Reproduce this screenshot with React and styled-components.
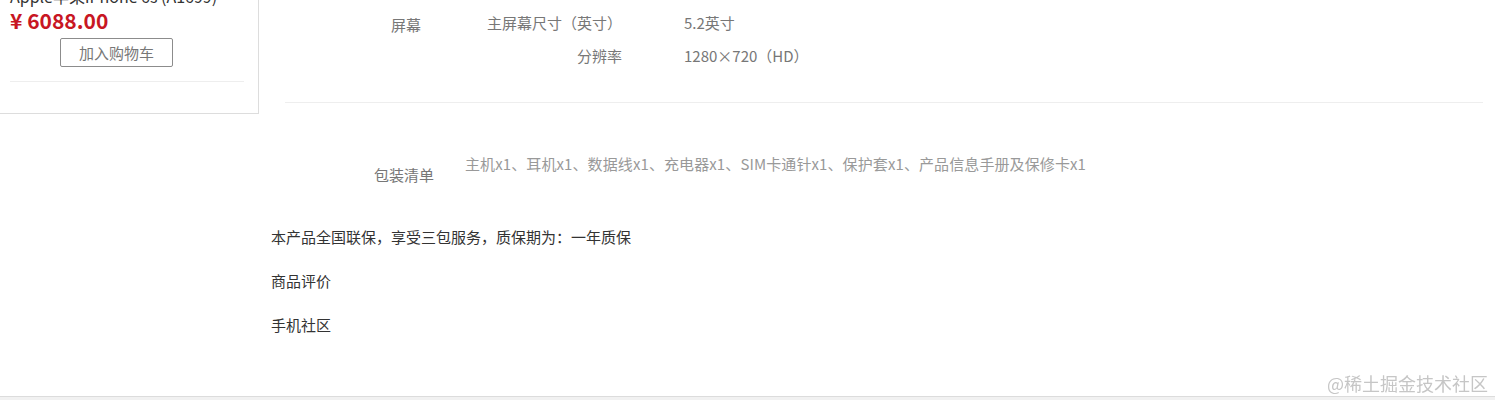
import React from "react";
import styled, { createGlobalStyle } from "styled-components";

const specs = [
  { key: "主屏幕尺寸（英寸）", value: "5.2英寸" },
  { key: "分辨率", value: "1280×720（HD）" },
];

const App = () => {
  return (
    <>
      <GlobalStyle />
      <Layout>
        <Card>
          <Title>Apple苹果iPhone 6s (A1699)</Title>
          <Price>¥ 6088.00</Price>
          <CartButton>加入购物车</CartButton>
          <CardLine />
        </Card>
        <Main>
          <SpecSection>
            <Group>
              <GroupLabel $w={201} $pad={106} $top={2}>
                屏幕
              </GroupLabel>
              <Rows>
                {specs.map((s) => (
                  <Row key={s.key}>
                    <Key>{s.key}</Key>
                    <Value>{s.value}</Value>
                  </Row>
                ))}
              </Rows>
            </Group>
          </SpecSection>
          <PackSection>
            <GroupLabel $w={180} $pad={89} $top={11}>
              包装清单
            </GroupLabel>
            <PackItems>
              主机x1、耳机x1、数据线x1、充电器x1、SIM卡通针x1、保护套x1、产品信息手册及保修卡x1
            </PackItems>
          </PackSection>
          <Notes>
            <Note>本产品全国联保，享受三包服务，质保期为：一年质保</Note>
            <Note>商品评价</Note>
            <Note>手机社区</Note>
          </Notes>
        </Main>
      </Layout>
      <Watermark>@稀土掘金技术社区</Watermark>
      <ScrollStrip />
    </>
  );
};

const GlobalStyle = createGlobalStyle`
  html, body {
    margin: 0;
    padding: 0;
    background: #fff;
    overflow: hidden;
  }
  body {
    font-family: "Noto Sans CJK SC", "Noto Sans", sans-serif;
    color: #333;
  }
`;

const Layout = styled.div`
  display: flex;
  align-items: flex-start;
  margin-top: -20px;
  padding-right: 12px;
`;

const Card = styled.div`
  box-sizing: border-box;
  width: 260px;
  margin-left: -1px;
  flex: 0 0 auto;
  border: 1px solid #ddd;
  padding: 4px 14px 31px 10px;
  display: flex;
  flex-direction: column;
  align-items: flex-start;
`;

const Title = styled.div`
  font-size: 16px;
  line-height: 22px;
  color: #333;
  white-space: nowrap;
`;

const Price = styled.div`
  font-size: 21px;
  line-height: 26px;
  font-weight: bold;
  color: #c81623;
`;

const CartButton = styled.button`
  box-sizing: border-box;
  margin: 5px 0 0 50px;
  width: 113px;
  height: 29px;
  border: 1px solid #8c8c8c;
  border-radius: 2px;
  background: #fff;
  color: #777;
  font-family: inherit;
  font-size: 15px;
  padding: 0;
  cursor: pointer;
`;

const CardLine = styled.div`
  align-self: stretch;
  height: 1px;
  background: #eee;
  margin-top: 14px;
`;

const Main = styled.div`
  flex: 1;
  margin-left: 12px;
  display: flex;
  flex-direction: column;
`;

const SpecSection = styled.div`
  margin-left: 14px;
  padding: 26px 0 30px;
  border-bottom: 1px solid #eee;
`;

const Group = styled.div`
  display: flex;
  align-items: flex-start;
`;

const GroupLabel = styled.div`
  box-sizing: border-box;
  flex: 0 0 ${(p) => p.$w}px;
  padding-left: ${(p) => p.$pad}px;
  padding-top: ${(p) => p.$top}px;
  font-size: 15px;
  line-height: 33px;
  color: #777;
  white-space: nowrap;
`;

const Rows = styled.div`
  display: flex;
  flex-direction: column;
`;

const Row = styled.div`
  display: flex;
  font-size: 15px;
  line-height: 33px;
  color: #777;
`;

const Key = styled.div`
  width: 136px;
  text-align: right;
  white-space: nowrap;
`;

const Value = styled.div`
  margin-left: 62px;
  white-space: nowrap;
`;

const PackSection = styled.div`
  margin-left: 14px;
  padding-top: 50px;
  display: flex;
  align-items: flex-start;

  ${GroupLabel} {
    line-height: 22px;
  }
`;

const PackItems = styled.div`
  font-size: 15px;
  line-height: 22px;
  color: #999;
  white-space: nowrap;
  letter-spacing: 0.1px;
`;

const Notes = styled.div`
  margin-top: 40px;
  display: flex;
  flex-direction: column;
  gap: 22px;
`;

const Note = styled.div`
  font-size: 15px;
  line-height: 22px;
  color: #333;
`;

const Watermark = styled.div`
  position: fixed;
  right: 7px;
  bottom: 6px;
  font-size: 18px;
  line-height: 22px;
  color: #c6c6c6;
  pointer-events: none;
`;

const ScrollStrip = styled.div`
  position: fixed;
  left: 0;
  right: 0;
  bottom: 0;
  height: 3px;
  border-top: 1px solid #dcdcdc;
  background: #f1f1f1;
`;

export default App;
